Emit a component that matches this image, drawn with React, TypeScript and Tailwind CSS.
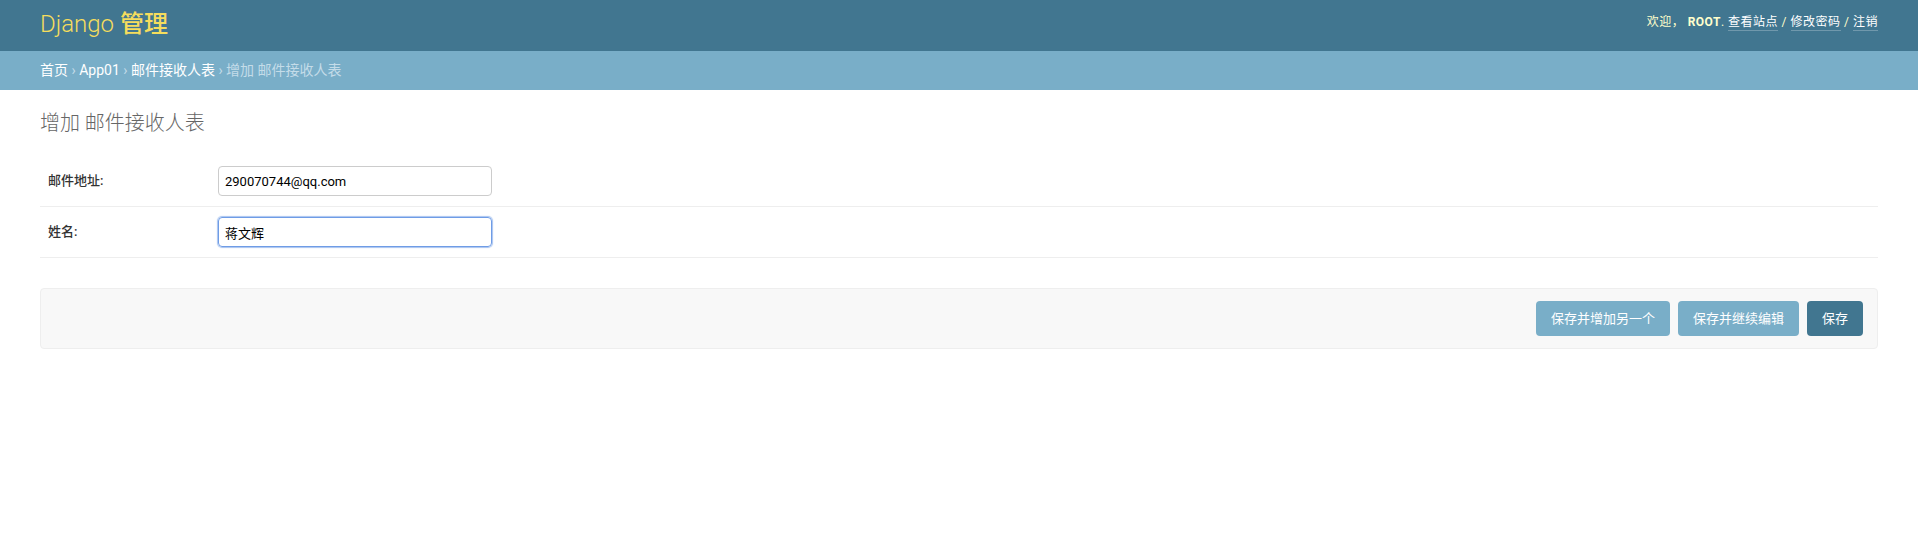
import React from "react";

const font = {
  fontFamily:
    'Roboto, "Noto Sans CJK SC", "Lucida Grande", "DejaVu Sans", Verdana, Arial, sans-serif',
};

function UserTools() {
  return (
    <div className="self-start pt-[13px] text-[12px] tracking-[0.5px] uppercase text-[#ffc]">
      欢迎，{" "}
      <strong className="font-bold">root</strong>.{" "}
      <a className="text-white border-b border-white/25 pb-px">查看站点</a> /{" "}
      <a className="text-white border-b border-white/25 pb-px">修改密码</a> /{" "}
      <a className="text-white border-b border-white/25 pb-px">注销</a>
    </div>
  );
}

function FormRow({ label, value, focused }: { label: string; value: string; focused?: boolean }) {
  return (
    <div className="flex items-center border-b border-[#eee] py-[10px] pl-2 text-[13px]">
      <label className="w-[170px] shrink-0 font-medium text-[#333]">{label}:</label>
      <input
        type="text"
        defaultValue={value}
        className={
          focused
            ? "w-[274px] h-[30px] rounded-[4px] border border-[#6f9ce6] px-[6px] text-[13px] text-black outline-none shadow-[0_0_1px_1px_#a8c4f0]"
            : "w-[274px] h-[30px] rounded-[4px] border border-[#ccc] px-[6px] text-[13px] text-black outline-none"
        }
      />
    </div>
  );
}

export default function App() {
  return (
    <div className="min-h-[551px] bg-white" style={font}>
      <div className="flex h-[51px] items-center justify-between bg-[#417690] px-10">
        <h1 className="text-[24px] font-light text-[#f5dd5d] leading-none -mt-[4px]">
          Django <span className="font-medium">管理</span>
        </h1>
        <UserTools />
      </div>

      <div className="bg-[#79aec8] px-10 py-[10px] text-[14px] leading-[19px] text-[#c4dce8]">
        <a className="text-white">首页</a> › <a className="text-white">App01</a> ›{" "}
        <a className="text-white">邮件接收人表</a> › 增加 邮件接收人表
      </div>

      <div className="px-10 pt-5">
        <h1 className="mb-5 text-[20px] leading-[26px] font-light text-[#666]">增加 邮件接收人表</h1>

        <div>
          <FormRow label="邮件地址" value="290070744@qq.com" />
          <FormRow label="姓名" value="蒋文辉" focused />
        </div>

        <div className="mt-[30px] flex justify-end gap-2 rounded-[4px] border border-[#eee] bg-[#f8f8f8] px-[14px] py-[12px]">
          <button className="rounded-[4px] bg-[#79aec8] px-[15px] py-[10px] text-[13px] leading-[15px] text-white">
            保存并增加另一个
          </button>
          <button className="rounded-[4px] bg-[#79aec8] px-[15px] py-[10px] text-[13px] leading-[15px] text-white">
            保存并继续编辑
          </button>
          <button className="rounded-[4px] bg-[#417690] px-[15px] py-[10px] text-[13px] leading-[15px] text-white">
            保存
          </button>
        </div>
      </div>
    </div>
  );
}
